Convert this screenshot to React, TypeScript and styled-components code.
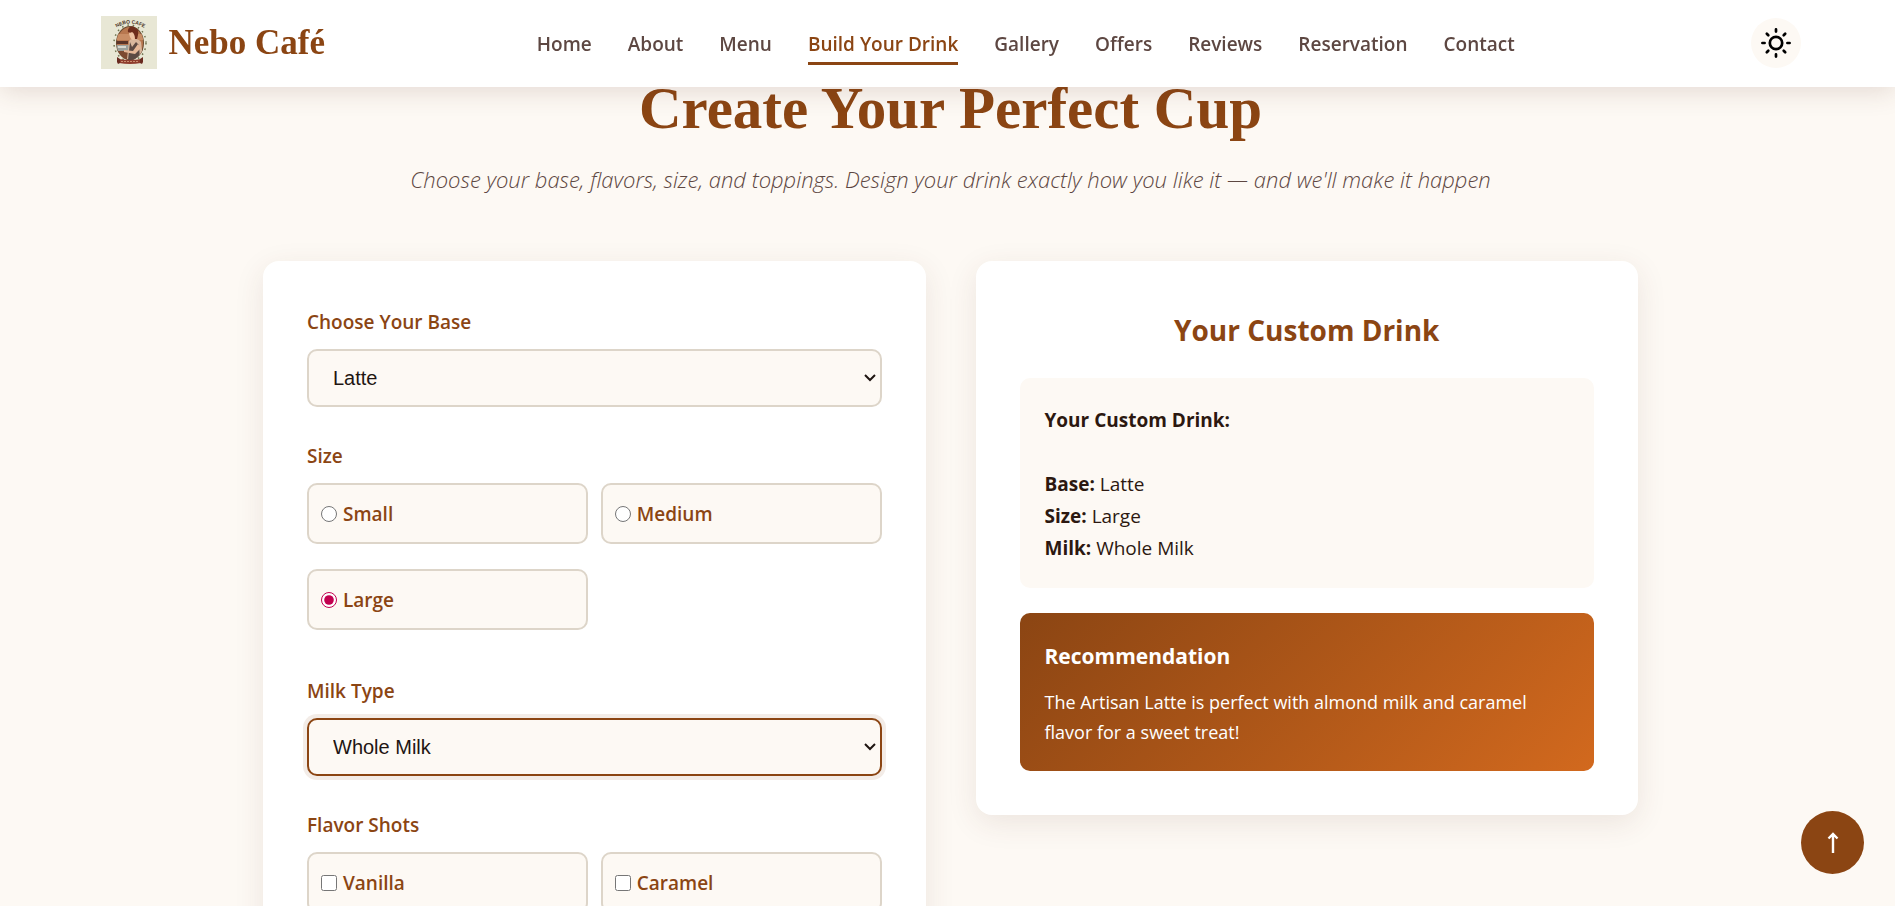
import React, { useState } from "react";
import styled, { createGlobalStyle } from "styled-components";

const color = {
  brown: "#8b4513",
  orange: "#d2691e",
  cream: "#fdf9f4",
  border: "#ddd5c9",
  ink: "#2c1810",
  muted: "#5d4742",
};

const chevron =
  "url(\"data:image/svg+xml,%3Csvg xmlns='http://www.w3.org/2000/svg' width='12' height='8' fill='none' stroke='%231f1512' stroke-width='2'%3E%3Cpath d='M1 1l5 5 5-5'/%3E%3C/svg%3E\")";

const GlobalStyle = createGlobalStyle`
  *, *::before, *::after { box-sizing: border-box; }
  html { overflow: hidden; }
  body {
    margin: 0;
    height: 100vh;
    overflow: hidden;
    background: ${color.cream};
    color: ${color.ink};
    font-family: "Open Sans", "Noto Sans", sans-serif;
    font-size: 19px;
    line-height: 32px;
  }
  h1, h2, h3, p, ul, fieldset { margin: 0; padding: 0; }
`;

const Header = styled.header`
  position: sticky;
  top: 0;
  z-index: 10;
  height: 87px;
  padding: 0 0 2px 6px;
  background: #fff;
  box-shadow: 0 4px 25px rgba(93, 50, 35, 0.16);
`;

const HeaderInner = styled.div`
  display: flex;
  align-items: center;
  justify-content: space-between;
  width: 90%;
  max-width: 1700px;
  height: 100%;
  margin: 0 auto;
`;

const Brand = styled.a`
  display: flex;
  align-items: center;
  gap: 12px;
  color: ${color.brown};
  font-family: "Liberation Serif", serif;
  font-size: 35px;
  font-weight: 700;
  text-decoration: none;
  white-space: nowrap;
`;

const NavList = styled.ul`
  display: flex;
  gap: 36px;
  list-style: none;
`;

const NavLink = styled.a<{ $active?: boolean }>`
  display: block;
  padding: 7px 0 2px;
  border-bottom: 3px solid ${(p) => (p.$active ? color.brown : "transparent")};
  color: ${(p) => (p.$active ? color.brown : color.muted)};
  font-weight: 600;
  text-decoration: none;
  white-space: nowrap;
`;

const ThemeButton = styled.button`
  display: grid;
  place-items: center;
  width: 50px;
  height: 50px;
  margin-left: 24px;
  padding: 0;
  border: 0;
  border-radius: 50%;
  background: ${color.cream};
  color: #000;
  cursor: pointer;
`;

const Main = styled.main`
  padding-left: 6px;
`;

const Intro = styled.section`
  text-align: center;
`;

const Title = styled.h1`
  color: ${color.brown};
  font-family: "Liberation Serif", serif;
  font-size: 59px;
  font-weight: 700;
  line-height: 42px;
`;

const Subtitle = styled.p`
  padding-top: 30px;
  color: ${color.muted};
  font-size: 22px;
  font-style: italic;
  font-weight: 350;
  line-height: 40px;
`;

const Columns = styled.div`
  display: grid;
  grid-template-columns: 1fr 1fr;
  align-items: start;
  gap: 50px;
  width: 90%;
  max-width: 1375px;
  margin: 62px auto 0;
`;

const Card = styled.section`
  padding: 44px;
  border-radius: 16px;
  background: #fff;
  box-shadow: 0 8px 30px rgba(93, 50, 35, 0.1);
`;

const Form = styled(Card).attrs({ as: "form" })``;

const Field = styled.div`
  margin-bottom: 32px;
`;

const OptionGroup = styled.fieldset`
  margin-bottom: 32px;
  border: 0;
`;

const FieldLabel = styled.label`
  display: block;
  margin-bottom: 10px;
  padding: 0;
  color: ${color.brown};
  font-weight: 600;
  line-height: 34px;
`;

const Select = styled.select<{ $active?: boolean }>`
  display: block;
  width: 100%;
  height: 58px;
  padding: 0 24px;
  border: 2px solid ${(p) => (p.$active ? color.brown : color.border)};
  border-radius: 10px;
  outline: 0;
  appearance: none;
  background: ${color.cream} ${chevron} no-repeat right 4px center;
  box-shadow: ${(p) => (p.$active ? "0 0 0 4px rgba(139, 69, 19, 0.1)" : "none")};
  color: #1f1512;
  font-family: "Liberation Sans", sans-serif;
  font-size: 20px;
`;

const Options = styled.div`
  display: grid;
  grid-template-columns: 1fr 1fr;
  gap: 13px;
`;

const Option = styled.label`
  display: flex;
  align-items: center;
  gap: 6px;
  height: 61px;
  margin-bottom: 12px;
  padding: 0 12px;
  border: 2px solid ${color.border};
  border-radius: 10px;
  background: ${color.cream};
  color: ${color.brown};
  font-weight: 600;

  input {
    width: 16px;
    height: 16px;
    margin: 0;
    accent-color: #c2004f;
  }
`;

const PreviewTitle = styled.h2`
  margin-bottom: 23px;
  color: ${color.brown};
  font-size: 28px;
  font-weight: 700;
  line-height: 50px;
  text-align: center;
`;

const Summary = styled.div`
  margin-bottom: 25px;
  padding: 26px 25px 24px;
  border-radius: 10px;
  background: ${color.cream};
`;

const SummaryHeading = styled.p`
  margin-bottom: 32px;
  font-weight: 700;
`;

const Recommendation = styled.div`
  padding: 26px 25px 24px;
  border-radius: 10px;
  background: linear-gradient(135deg, ${color.brown}, ${color.orange});
  color: #fff;

  h3 {
    margin-bottom: 13px;
    font-size: 21px;
    font-weight: 700;
    line-height: 35px;
  }

  p {
    font-size: 18px;
    line-height: 30px;
  }
`;

const TopButton = styled.button`
  position: fixed;
  right: 31px;
  bottom: 32px;
  z-index: 9;
  display: grid;
  place-items: center;
  width: 63px;
  height: 63px;
  padding: 0;
  border: 0;
  border-radius: 50%;
  background: ${color.brown};
  color: #fff;
  cursor: pointer;
`;

const NAV = ["Home", "About", "Menu", "Build Your Drink", "Gallery", "Offers", "Reviews", "Reservation", "Contact"];
const BASES = ["Latte", "Espresso", "Cappuccino", "Mocha"];
const SIZES = ["Small", "Medium", "Large"];
const MILKS = ["Whole Milk", "Almond Milk", "Oat Milk", "Soy Milk"];
const FLAVORS = ["Vanilla", "Caramel"];

const Logo = () => (
  <svg width="56" height="53" viewBox="0 0 56 53" aria-hidden="true">
    <rect width="56" height="53" fill="#e8e7d5" />
    <defs>
      <path id="logo-arc" d="M13 13.500 Q28.500 1.500 46 13.500" />
      <clipPath id="logo-oval">
        <ellipse cx="29" cy="27" rx="13.500" ry="17" />
      </clipPath>
    </defs>
    <ellipse cx="29" cy="27" rx="16" ry="18" fill="none" stroke="#6f7350" strokeWidth="1.500" strokeDasharray="1.500 4" />
    <ellipse cx="29" cy="27" rx="14" ry="17" fill="#6b4a30" />
    <g clipPath="url(#logo-oval)">
      <ellipse cx="29" cy="27" rx="13" ry="16" fill="#b8774f" />
      <path d="M14 18h30v6H14z" fill="#c98d65" />
      <path d="M14 34h30v12H14z" fill="#7c4a31" />
      <path d="M15 25h12v3H15z" fill="#5a3529" />
      <path d="M15 29h13v6H15z" fill="#9ba09b" />
      <path d="M17 30h8v2h-8z" fill="#d8d8cf" />
      <path d="M28 25c2-3 9-3 12 1l2 17H26z" fill="#d8b79d" />
      <path d="M29 26l2 5 4-5 3 3 1 15H27z" fill="#5c4a43" />
      <path d="M37 28l-5 7-9-1v2l11 2 6-6z" fill="#e5b797" />
    </g>
    <path d="M28 16c1-3 7-3 7 2 0 4-1 6-3 6s-4-4-4-8z" fill="#edc2a1" />
    <path d="M27 16c-1-5 5-7 7-4 5 1 3 7 2 11h-2c0-3-1-6-3-7-1 1-3 1-4 0z" fill="#6e2d1c" />
    <path d="M18 43q11 2 22 0v4q-11 2-22 0z" fill="#8e3c2c" />
    <path d="M16 41l3 2v4l-2 1-1-2zM42 41l-3 2v4l2 1 1-2z" fill="#692a20" />
    <path d="M20 45.500h18" stroke="#c98c70" strokeWidth="1" strokeDasharray="2 1" />
    <text fill="#4a3526" fontSize="5" fontWeight="700" fontFamily="Liberation Sans, sans-serif" textAnchor="middle">
      <textPath href="#logo-arc" startOffset="50%">NEBO CAFE</textPath>
    </text>
  </svg>
);

const SunIcon = () => (
  <svg width="34" height="34" viewBox="0 0 34 34" fill="none" stroke="currentColor" strokeWidth="2.700" strokeLinecap="round" aria-hidden="true">
    <circle cx="17" cy="17" r="6.200" />
    <path d="M17 3.400v2.200M17 28.400v2.200M3.400 17h2.200M28.400 17h2.200M7.800 7.800l1.500 1.500M24.700 24.700l1.500 1.500M7.800 26.200l1.500-1.500M24.700 9.300l1.500-1.500" />
  </svg>
);

const UpArrow = () => (
  <svg width="14" height="24" viewBox="0 0 14 24" fill="none" stroke="currentColor" strokeWidth="2.400" aria-hidden="true">
    <path d="M7 22V3M2.500 7.500l4.500-4.500 4.500 4.500" />
  </svg>
);

export default function App() {
  const [base, setBase] = useState("Latte");
  const [size, setSize] = useState("Large");
  const [milk, setMilk] = useState("Whole Milk");

  return (
    <>
      <GlobalStyle />
      <Header>
        <HeaderInner>
          <Brand href="#home">
            <Logo />
            Nebo Café
          </Brand>
          <nav aria-label="Main">
            <NavList>
              {NAV.map((item) => (
                <li key={item}>
                  <NavLink href={"#" + item.toLowerCase().replace(/ /g, "-")} $active={item === "Build Your Drink"}>
                    {item}
                  </NavLink>
                </li>
              ))}
            </NavList>
          </nav>
          <ThemeButton type="button" aria-label="Toggle theme">
            <SunIcon />
          </ThemeButton>
        </HeaderInner>
      </Header>
      <Main>
        <Intro>
          <Title>Create Your Perfect Cup</Title>
          <Subtitle>
            Choose your base, flavors, size, and toppings. Design your drink exactly how you like it — and we'll make it happen
          </Subtitle>
        </Intro>
        <Columns>
          <Form>
            <Field>
              <FieldLabel htmlFor="base">Choose Your Base</FieldLabel>
              <Select id="base" value={base} onChange={(e) => setBase(e.target.value)}>
                {BASES.map((b) => (
                  <option key={b}>{b}</option>
                ))}
              </Select>
            </Field>
            <OptionGroup>
              <FieldLabel as="legend">Size</FieldLabel>
              <Options>
                {SIZES.map((s) => (
                  <Option key={s}>
                    <input type="radio" name="size" checked={size === s} onChange={() => setSize(s)} />
                    {s}
                  </Option>
                ))}
              </Options>
            </OptionGroup>
            <Field>
              <FieldLabel htmlFor="milk">Milk Type</FieldLabel>
              <Select id="milk" $active value={milk} onChange={(e) => setMilk(e.target.value)}>
                {MILKS.map((m) => (
                  <option key={m}>{m}</option>
                ))}
              </Select>
            </Field>
            <OptionGroup>
              <FieldLabel as="legend">Flavor Shots</FieldLabel>
              <Options>
                {FLAVORS.map((f) => (
                  <Option key={f}>
                    <input type="checkbox" name="flavor" value={f} />
                    {f}
                  </Option>
                ))}
              </Options>
            </OptionGroup>
          </Form>
          <Card>
            <PreviewTitle>Your Custom Drink</PreviewTitle>
            <Summary>
              <SummaryHeading>Your Custom Drink:</SummaryHeading>
              <p><strong>Base:</strong> {base}</p>
              <p><strong>Size:</strong> {size}</p>
              <p><strong>Milk:</strong> {milk}</p>
            </Summary>
            <Recommendation>
              <h3>Recommendation</h3>
              <p>The Artisan Latte is perfect with almond milk and caramel flavor for a sweet treat!</p>
            </Recommendation>
          </Card>
        </Columns>
      </Main>
      <TopButton type="button" aria-label="Back to top">
        <UpArrow />
      </TopButton>
    </>
  );
}
